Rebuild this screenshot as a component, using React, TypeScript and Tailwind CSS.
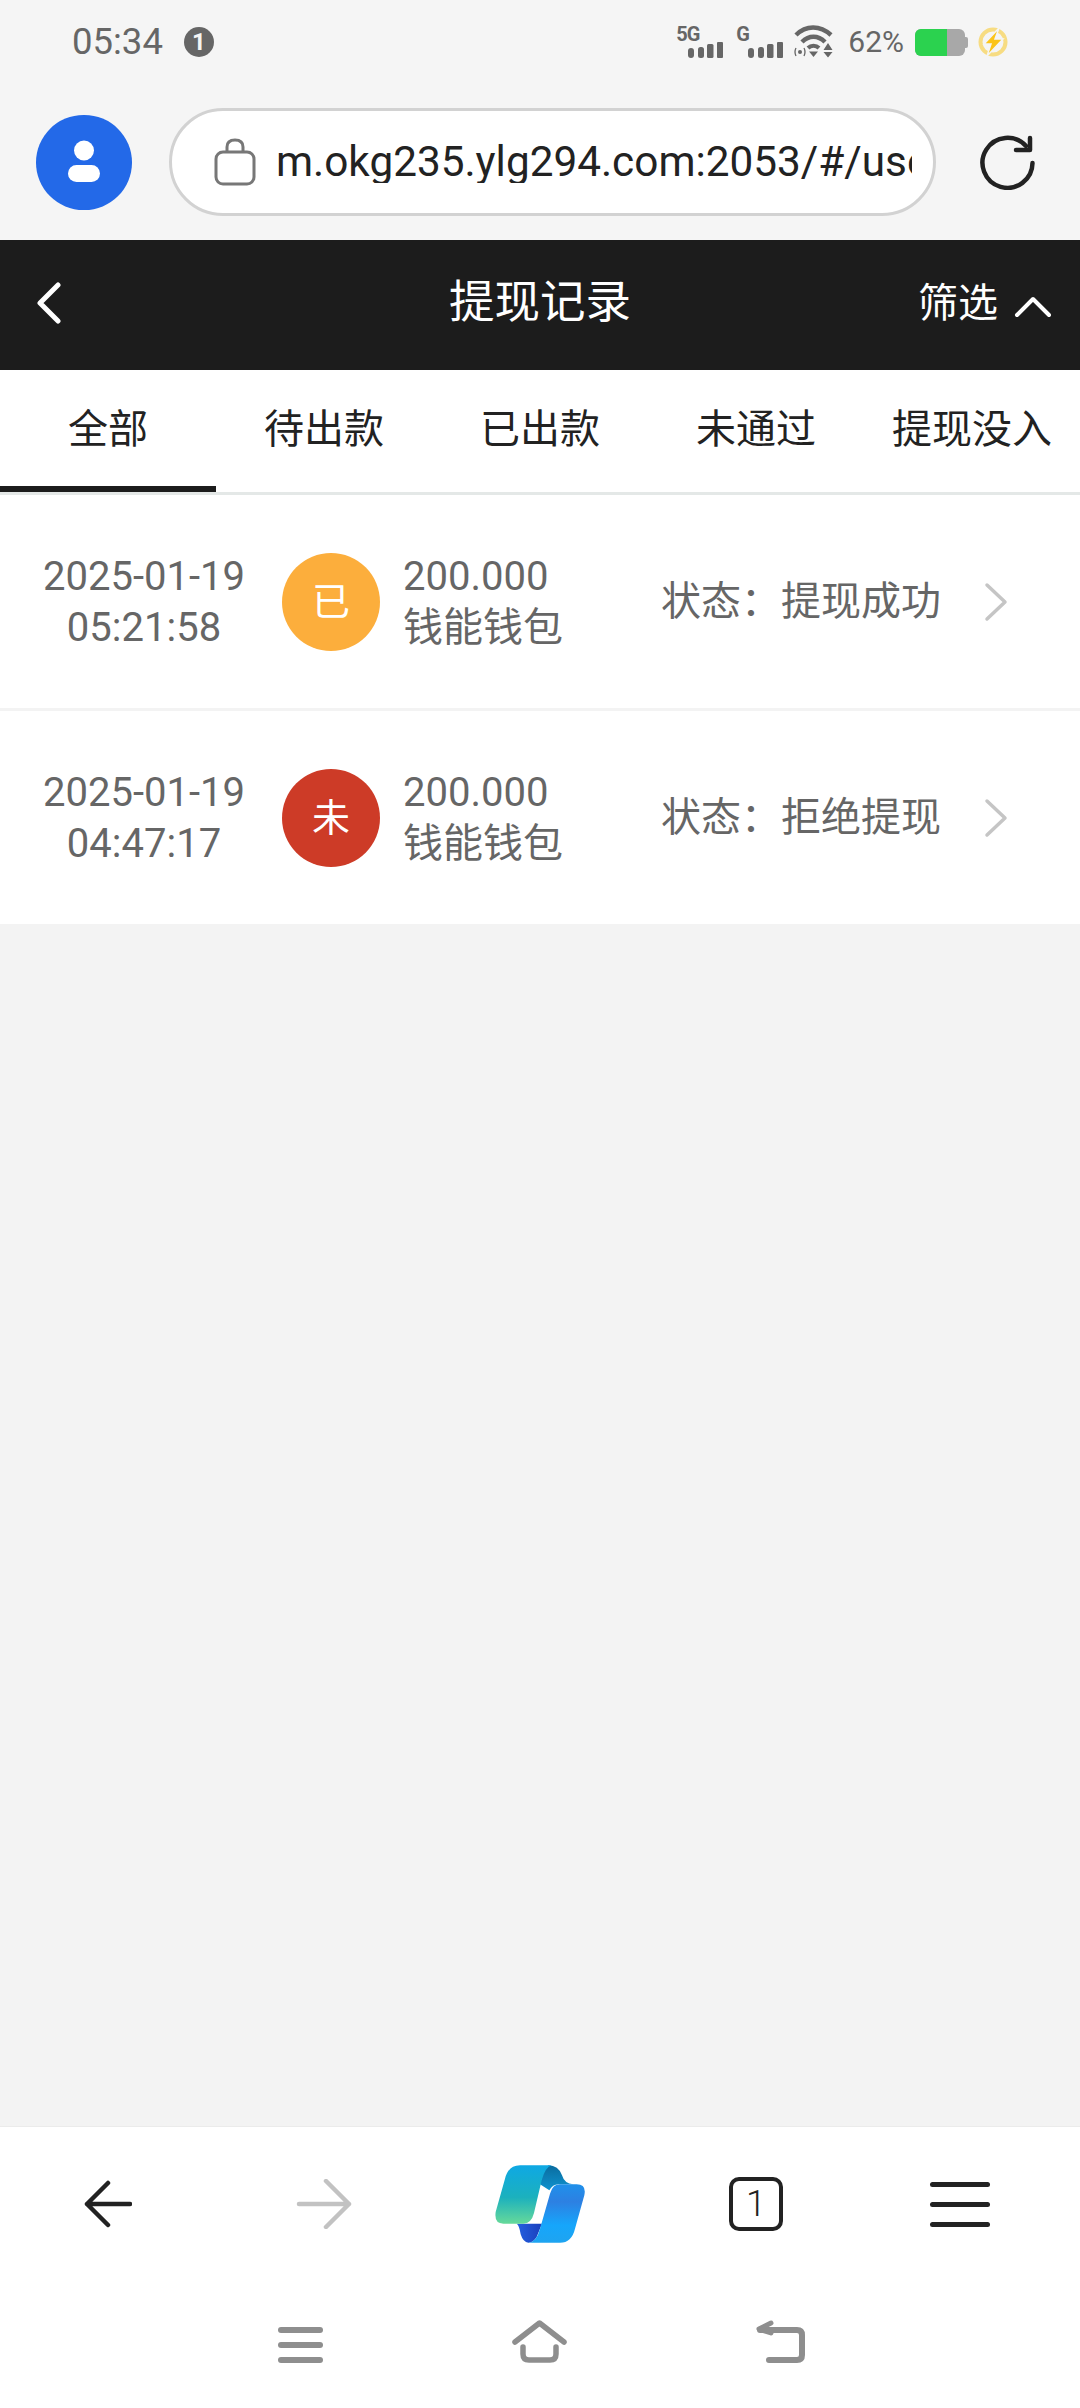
const font = '[font-family:Roboto,"Noto_Sans_CJK_SC",sans-serif]';

const tabs = ["全部", "待出款", "已出款", "未通过", "提现没入"];

const records = [
  { date: "2025-01-19", time: "05:21:58", badge: "已", badgeClass: "bg-[#fcae3c]", amount: "200.000", wallet: "钱能钱包", status: "状态：提现成功" },
  { date: "2025-01-19", time: "04:47:17", badge: "未", badgeClass: "bg-[#cd3b27]", amount: "200.000", wallet: "钱能钱包", status: "状态：拒绝提现" },
];

function SignalBars({ label }: { label: string }) {
  return (
    <div className="flex h-[31px] w-[47px] flex-col">
      <span className="text-[20px] font-bold leading-[15px] tracking-[-1px] text-[#666]">{label}</span>
      <svg width="35" height="16" viewBox="0 0 35 16" fill="#666" className="self-end">
        <rect x="0" y="6" width="6" height="10" rx="3" />
        <rect x="10" y="5" width="6" height="11" rx="2.5" />
        <rect x="19" y="2" width="6.5" height="14" rx="1.5" />
        <rect x="29" y="0" width="6" height="16" rx="1" />
      </svg>
    </div>
  );
}

function Wifi() {
  return (
    <svg width="39" height="34" viewBox="0 0 39 34" fill="none">
      <path d="M2 10 C12 0 26 0 37 10" stroke="#666" strokeWidth="4.5" />
      <path d="M8 17 C15 10 24 10 31 17" stroke="#666" strokeWidth="4.5" />
      <path d="M14 23 C17 20 22 20 25 23" stroke="#666" strokeWidth="4" />
      <path d="M15 26.5 H24 L19.5 32 Z" fill="#666" />
      <circle cx="6" cy="27" r="2" fill="#666" />
      <path d="M2 23 Q0 27 2 31 M10 23 Q12 27 10 31" stroke="#666" strokeWidth="1.3" />
      <path d="M34 18 L38.5 25 H29.5 Z M29.5 27 H38.5 L34 32.5 Z" fill="#666" />
    </svg>
  );
}

function Battery() {
  return (
    <div className="flex items-center">
      <div className="flex h-[27px] w-[50px] overflow-hidden rounded-[6px] bg-[#a8a8a8]">
        <div className="h-full w-[32px] bg-[#2bd24f]" />
      </div>
      <div className="h-[11px] w-[3px] rounded-r-[2px] bg-[#a8a8a8]" />
    </div>
  );
}

function ChargeBolt() {
  return (
    <svg width="30" height="32" viewBox="0 0 30 32" fill="none">
      <circle cx="15" cy="16" r="12.5" stroke="#f7dc82" strokeWidth="4" />
      <path d="M21 2 L6 18 H13 L9 30 L25 13 H17 Z" fill="#fbc41a" stroke="#f5f5f5" strokeWidth="1.5" />
    </svg>
  );
}

function StatusBar() {
  return (
    <div className="flex h-[100px] items-start justify-between pl-[72px] pr-[72px] pt-[22px]">
      <div className="flex h-[40px] items-center">
        <span className="text-[36.5px] leading-none text-[#666]">05:34</span>
        <span className="ml-[21px] flex h-[30px] w-[30px] items-center justify-center rounded-full bg-[#666] text-[24px] font-bold leading-none text-[#f5f5f5]">1</span>
      </div>
      <div className="flex h-[40px] items-center">
        <SignalBars label="5G" />
        <div className="w-[13px]" />
        <SignalBars label="G" />
        <div className="w-[11px]" />
        <Wifi />
        <span className="ml-[15px] text-[30px] leading-none text-[#666]">62%</span>
        <div className="ml-[11px]"><Battery /></div>
        <div className="ml-[10px]"><ChargeBolt /></div>
      </div>
    </div>
  );
}

function BrowserBar() {
  return (
    <div className="flex h-[140px] items-center pb-[16px] pl-[36px]">
      <div className="flex h-[95px] w-[96px] items-center justify-center rounded-full bg-[#2369e8]">
        <svg width="34" height="44" viewBox="0 0 34 44">
          <circle cx="17" cy="10.5" r="10" fill="#fff" />
          <rect x="1" y="25" width="32" height="17" rx="8.5" fill="#fff" />
        </svg>
      </div>
      <div className="ml-[37px] flex h-[108px] w-[767px] items-center rounded-full border-[3px] border-[#d2d2d2] bg-white pl-[42px] pr-[21px]">
        <svg width="42" height="48" viewBox="0 0 42 48" fill="none" className="shrink-0">
          <path d="M13 14 V9 Q13 2 21 2 Q29 2 29 9 V14" stroke="#777" strokeWidth="3" />
          <rect x="2" y="14" width="38" height="32" rx="7" stroke="#777" strokeWidth="3" />
        </svg>
        <div className="ml-[20px] min-w-0 flex-1 overflow-hidden whitespace-nowrap text-[42.3px] leading-none text-[#222]">
          m.okg235.ylg294.com:2053/#/user/withdraw
        </div>
      </div>
      <svg width="55" height="55" viewBox="0 0 55 55" fill="none" className="ml-[44px]">
        <path d="M46 11 A25 25 0 1 0 52.5 28" stroke="#222" strokeWidth="4.5" strokeLinecap="round" />
        <path d="M36 15 H50 V3" stroke="#222" strokeWidth="4.5" strokeLinecap="round" strokeLinejoin="round" />
      </svg>
    </div>
  );
}

function TitleBar() {
  return (
    <div className="grid h-[130px] grid-cols-[1fr_auto_1fr] items-center bg-[#1c1c1c] pb-[4px] text-white">
      <div className="pl-[36px]">
        <svg width="26" height="42" viewBox="0 0 26 42" fill="none">
          <path d="M22 3 L4 21 L22 39" stroke="#fff" strokeWidth="5" strokeLinecap="round" strokeLinejoin="round" />
        </svg>
      </div>
      <div className="text-[45.5px] leading-none">提现记录</div>
      <div className="flex items-center justify-end pr-[28px]">
        <span className="pt-[2px] text-[40px] leading-none">筛选</span>
        <svg width="38" height="22" viewBox="0 0 38 22" fill="none" className="ml-[16px] mt-[8px]">
          <path d="M3 19 L19 3 L35 19" stroke="#fff" strokeWidth="4" strokeLinecap="round" strokeLinejoin="round" />
        </svg>
      </div>
    </div>
  );
}

function Tabs() {
  return (
    <div className="grid h-[125px] grid-cols-5 border-b-[3px] border-[#e4e8e7] bg-white">
      {tabs.map((tab, i) => (
        <div
          key={tab}
          className={`flex items-center justify-center whitespace-nowrap text-[40px] leading-none text-[#222] ${i === 0 ? "border-b-[6px] border-[#1c1c1c] pt-[4px]" : "pb-[2px]"}`}
        >
          {tab}
        </div>
      ))}
    </div>
  );
}

function RecordRow({ rec, last }: { rec: (typeof records)[number]; last: boolean }) {
  return (
    <div className={`flex items-center bg-white text-[#666] ${last ? "h-[213px]" : "h-[216px] border-b-[3px] border-[#f3f3f3]"}`}>
      <div className="ml-[36px] w-[216px] text-center text-[40px] leading-[51px]">
        <div>{rec.date}</div>
        <div>{rec.time}</div>
      </div>
      <div className={`ml-[30px] flex h-[98px] w-[98px] items-center justify-center rounded-full text-[38px] leading-none text-white ${rec.badgeClass}`}>
        {rec.badge}
      </div>
      <div className="ml-[23px] w-[258px] text-[40px] leading-[51px]">
        <div>{rec.amount}</div>
        <div>{rec.wallet}</div>
      </div>
      <div className="w-[323px] whitespace-nowrap text-[40px] leading-none">{rec.status}</div>
      <svg width="26" height="40" viewBox="0 0 26 40" fill="none">
        <path d="M3 3 L21 20 L3 37" stroke="#c5c5c5" strokeWidth="3.5" strokeLinecap="round" strokeLinejoin="round" />
      </svg>
    </div>
  );
}

function CopilotLogo() {
  return (
    <svg width="90" height="78" viewBox="75 75 270 232">
      <defs>
        <linearGradient id="bandLeft" x1="0" y1="0" x2="0" y2="1">
          <stop offset="0" stopColor="#0ea8e4" />
          <stop offset="0.55" stopColor="#1cb1bd" />
          <stop offset="1" stopColor="#66d99a" />
        </linearGradient>
        <linearGradient id="bandRight" x1="0" y1="0" x2="0" y2="1">
          <stop offset="0" stopColor="#1f90ea" />
          <stop offset="0.3" stopColor="#2d80e2" />
          <stop offset="0.7" stopColor="#16a6fb" />
          <stop offset="1" stopColor="#1ea4f0" />
        </linearGradient>
        <linearGradient id="tailTop" x1="0" y1="0" x2="0" y2="1">
          <stop offset="0" stopColor="#0a6c9f" />
          <stop offset="1" stopColor="#0f93cf" />
        </linearGradient>
        <linearGradient id="tailBottom" x1="0" y1="0" x2="1" y2="0">
          <stop offset="0" stopColor="#2560e0" />
          <stop offset="1" stopColor="#1a3fbc" />
        </linearGradient>
      </defs>
      <path d="M235 75 Q265 75 276 105 Q283 130 310 132 H265 Q248 132 238 150 L210 132 L220 90 Z" fill="url(#tailTop)" />
      <path d="M140 250 H216 L200 290 Q190 307 175 307 Q160 307 152 282 Q148 255 140 250 Z" fill="url(#tailBottom)" />
      <path d="M150 75 H245 Q226 80 215 120 L192 218 Q184 250 160 250 H100 Q72 250 77 215 L105 115 Q115 75 150 75 Z" fill="url(#bandLeft)" />
      <path d="M270 132 H320 Q350 132 343 165 L315 265 Q305 307 270 307 H175 Q200 305 210 265 L240 160 Q248 132 270 132 Z" fill="url(#bandRight)" />
    </svg>
  );
}

function BrowserNav() {
  return (
    <div className="grid h-[154px] grid-cols-5 items-center">
      <div className="flex justify-center">
        <svg width="48" height="48" viewBox="0 0 48 48" fill="none">
          <path d="M46 24 H3 M24 3 L3 24 L24 45" stroke="#222" strokeWidth="4.5" strokeLinecap="round" strokeLinejoin="round" />
        </svg>
      </div>
      <div className="flex justify-center">
        <svg width="56" height="50" viewBox="0 0 56 50" fill="none">
          <path d="M3 25 H53 M30 2 L53 25 L30 48" stroke="#c2c2c2" strokeWidth="4.5" strokeLinecap="round" strokeLinejoin="round" />
        </svg>
      </div>
      <div className="flex justify-center"><CopilotLogo /></div>
      <div className="flex justify-center">
        <div className="flex h-[54px] w-[54px] items-center justify-center rounded-[10px] border-[4px] border-[#222] text-[36px] font-light leading-none text-[#222]">1</div>
      </div>
      <div className="flex justify-center pr-[24px]">
        <div className="flex w-[60px] flex-col gap-[15px]">
          <div className="h-[5px] rounded-full bg-[#222]" />
          <div className="h-[5px] rounded-full bg-[#222]" />
          <div className="h-[5px] rounded-full bg-[#222]" />
        </div>
      </div>
    </div>
  );
}

function SystemNav() {
  return (
    <div className="flex h-[127px] items-start justify-center pl-[2px] pt-[46px]">
      <div className="flex w-[45px] flex-col gap-[9px]">
        <div className="h-[6px] rounded-full bg-[#8e8e8e]" />
        <div className="h-[6px] rounded-full bg-[#8e8e8e]" />
        <div className="h-[6px] rounded-full bg-[#8e8e8e]" />
      </div>
      <svg width="55" height="43" viewBox="0 0 55 43" fill="none" className="-mt-[7px] ml-[189px]">
        <path d="M3 22 L27.5 3 L52 22" stroke="#8e8e8e" strokeWidth="5.5" strokeLinecap="round" strokeLinejoin="round" />
        <path d="M11 27 V34 Q11 40 17 40 H38 Q44 40 44 34 V27" stroke="#8e8e8e" strokeWidth="5.5" strokeLinecap="round" />
      </svg>
      <svg width="49" height="43" viewBox="0 0 49 43" fill="none" className="-mt-[7px] ml-[189px]">
        <path d="M4 10 H41 Q46 10 46 15 V35 Q46 40 41 40 H13" stroke="#8e8e8e" strokeWidth="6" strokeLinecap="round" strokeLinejoin="round" />
        <path d="M15 3 L3 9 L15 13" stroke="#8e8e8e" strokeWidth="5" strokeLinecap="round" strokeLinejoin="round" />
      </svg>
    </div>
  );
}

export default function App() {
  return (
    <div className={`flex h-[2408px] w-[1080px] flex-col overflow-hidden bg-[#f3f3f3] ${font}`}>
      <div className="bg-[#f5f5f5]">
        <StatusBar />
        <BrowserBar />
      </div>
      <TitleBar />
      <Tabs />
      <div>
        {records.map((rec, i) => (
          <RecordRow key={rec.time} rec={rec} last={i === records.length - 1} />
        ))}
      </div>
      <div className="flex-1" />
      <div className="h-[282px] border-t border-[#ebebeb] bg-white">
        <BrowserNav />
        <SystemNav />
      </div>
    </div>
  );
}
